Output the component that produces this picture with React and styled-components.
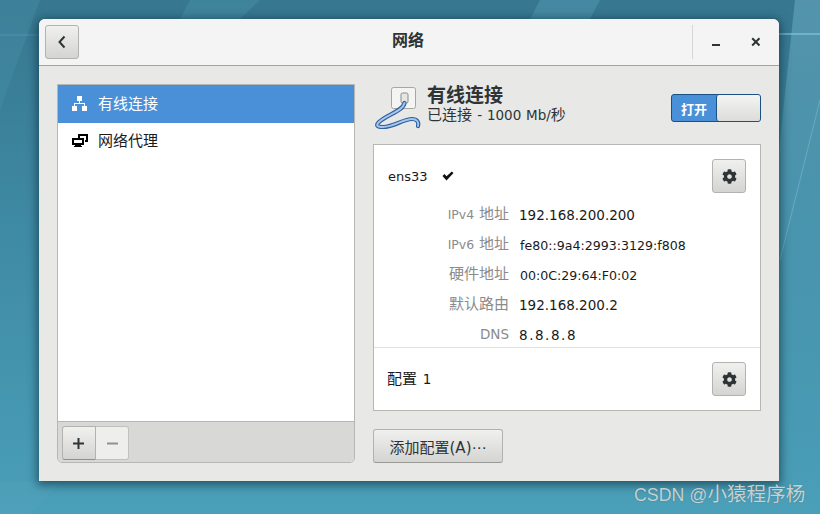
import React from "react";
import styled, { createGlobalStyle } from "styled-components";
import { FaCog } from "react-icons/fa";

const Global = createGlobalStyle`
  html, body { margin: 0; padding: 0; width: 820px; height: 514px; overflow: hidden; }
  body { font-family: "DejaVu Sans", "Noto Sans CJK SC", sans-serif; }
  * { box-sizing: border-box; }
`;

const Desktop = styled.div`
  position: relative;
  width: 820px;
  height: 514px;
  padding: 19px 41px 33px 39px;
  overflow: hidden;
  background: linear-gradient(180deg, #37778f 0%, #3f8aa4 45%, #4a9fb9 100%);
`;

const Wallpaper = styled.svg`
  position: absolute;
  inset: 0;
`;

const Window = styled.div`
  position: relative;
  width: 740px;
  height: 462px;
  display: flex;
  flex-direction: column;
  background: #e8e8e7;
  border-radius: 6px 6px 0 0;
  box-shadow: 0 2px 10px 2px rgba(8, 40, 55, 0.6);
`;

const Header = styled.header`
  position: relative;
  height: 47px;
  flex: none;
  display: flex;
  align-items: center;
  padding: 0 0 1px 6px;
  background: #f4f4f4;
  border-bottom: 1px solid #a3a3a0;
  border-radius: 6px 6px 0 0;
`;

const Title = styled.h1`
  position: absolute;
  left: 0;
  right: 2px;
  top: 12px;
  margin: 0;
  text-align: center;
  font-size: 16px;
  line-height: 20px;
  font-weight: 700;
  color: #2e3436;
`;

const raised = `
  border: 1px solid #b2b2af;
  border-radius: 3px;
  background: linear-gradient(180deg, #f0f0ef 0%, #d4d4d2 100%);
  padding: 0;
  display: flex;
  align-items: center;
  justify-content: center;
  color: #2e3436;
`;

const BackButton = styled.button`
  ${raised}
  width: 34px;
  height: 34px;
`;

const WindowControls = styled.div`
  margin-left: auto;
  height: 34px;
  width: 87px;
  border-left: 1px solid #d6d6d4;
  display: flex;
  align-items: center;
  padding-left: 19px;
  gap: 30px;
`;

const Body = styled.main`
  flex: 1;
  display: flex;
  gap: 18px;
  padding: 18px;
`;

const Sidebar = styled.aside`
  width: 298px;
  height: 379px;
  display: flex;
  flex-direction: column;
  background: #fff;
  border: 1px solid #b6b6b3;
  border-radius: 0 0 5px 5px;
`;

const SideList = styled.ul`
  flex: 1;
  margin: 0;
  padding: 0;
  list-style: none;
`;

const SideRow = styled.li`
  height: 38px;
  display: flex;
  align-items: center;
  gap: 10px;
  padding: 0 0 0 14px;
  font-size: 15px;
  color: ${(p) => (p.$active ? "#fff" : "#1a1a1a")};
  background: ${(p) => (p.$active ? "#4a90d9" : "transparent")};
`;

const SideLabel = styled.span`
  margin-bottom: ${(p) => (p.$active ? 4 : 6)}px;
`;

const SideIcon = styled.svg`
  margin-bottom: ${(p) => (p.$active ? 1 : 3)}px;
`;

const SideToolbar = styled.div`
  height: 41px;
  flex: none;
  display: flex;
  padding: 4px;
  background: #d8d8d6;
  border-top: 1px solid #b6b6b3;
  border-radius: 0 0 4px 4px;
`;

const AddButton = styled.button`
  ${raised}
  width: 34px;
  height: 34px;
  padding-right: 2px;
  border-radius: 3px 0 0 3px;
  border-color: #b2b2af #b2b2af #8f8f8c;
`;

const RemoveButton = styled.button`
  width: 33px;
  height: 34px;
  padding: 0;
  display: flex;
  align-items: center;
  justify-content: center;
  border: 1px solid #c0c0bd;
  border-left: none;
  border-radius: 0 3px 3px 0;
  background: #eeeeed;
`;

const Panel = styled.section`
  width: 388px;
  display: flex;
  flex-direction: column;
`;

const PanelHead = styled.div`
  height: 60px;
  display: flex;
  align-items: flex-start;
`;

const DeviceIcon = styled.svg`
  flex: none;
  margin: 1px 5px 0 1px;
`;

const DeviceText = styled.div`
  display: flex;
  flex-direction: column;
`;

const DeviceName = styled.div`
  font-size: 19px;
  line-height: 22px;
  font-weight: 700;
  color: #2e3436;
`;

const DeviceStatus = styled.div`
  font-size: 15px;
  line-height: 19px;
  color: #2e3436;
  word-spacing: 0.5px;
`;

const Latin = styled.span`
  font-size: ${(p) => p.$size || 13.5}px;
`;

const Toggle = styled.div`
  margin: 10px 0 0 auto;
  width: 90px;
  height: 28px;
  display: flex;
  border: 1px solid #1c4f82;
  border-radius: 3px;
  overflow: hidden;
  background: #4a90d9;
`;

const ToggleLabel = styled.span`
  width: 44px;
  display: flex;
  align-items: center;
  justify-content: center;
  color: #fff;
  font-size: 13px;
  font-weight: 700;
`;

const ToggleKnob = styled.span`
  flex: 1;
  border-left: 1px solid #1c4f82;
  border-radius: 3px 0 0 3px;
  background: linear-gradient(180deg, #f4f4f3 0%, #dcdcda 100%);
`;

const Card = styled.div`
  height: 267px;
  padding-top: 14px;
  background: #fff;
  border: 1px solid #b6b6b3;
  display: flex;
  flex-direction: column;
`;

const ConnRow = styled.div`
  height: 34px;
  flex: none;
  padding: 0 14px;
  display: flex;
  align-items: center;
  font-size: 13px;
  color: #1a1a1a;
`;

const CheckIcon = styled.svg`
  margin-left: 14px;
`;

const GearButton = styled.button`
  ${raised}
  width: 34px;
  height: 34px;
  margin-left: auto;
`;

const DetailGrid = styled.dl`
  flex: 1;
  margin: 7px 0 0;
  padding: 0;
  display: grid;
  grid-template-columns: 135px 1fr;
  grid-auto-rows: 30px;
  column-gap: 10px;
  align-items: center;
  overflow: hidden;
`;

const Term = styled.dt`
  text-align: right;
  color: #8b8b8b;
  font-size: 15px;
  line-height: 18px;
  margin-top: -2px;
`;

const Value = styled.dd`
  margin: 0;
  padding-left: ${(p) => (p.$hex ? "1px" : "0")};
  color: #1a1a1a;
  font-size: ${(p) => (p.$hex ? "12.6px" : "13.5px")};
  letter-spacing: ${(p) => (p.$wide ? "1.55px" : "0")};
  white-space: nowrap;
`;

const ProfileRow = styled.div`
  height: 63px;
  flex: none;
  padding: 0 14px 0 13px;
  display: flex;
  align-items: center;
  border-top: 1px solid #e2e2e0;
  font-size: 15px;
  color: #1a1a1a;
`;

const ProfileName = styled.span`
  margin-top: -3px;
  word-spacing: 1px;
`;

const AddProfile = styled.button`
  ${raised}
  margin-top: 18px;
  width: 130px;
  height: 34px;
  font-family: inherit;
  font-size: 15px;
  color: #2e3436;
  border-color: #b2b2af #b2b2af #989895;
`;

const Watermark = styled.div`
  position: absolute;
  left: 634px;
  top: 483px;
  font-family: "Liberation Sans", "Noto Sans CJK SC", sans-serif;
  font-size: 17.8px;
  line-height: 22px;
  color: rgba(222, 228, 228, 0.85);
  text-shadow: 0 0 1px rgba(60, 70, 70, 0.6);
  white-space: nowrap;
`;

const WatermarkName = styled.span`
  font-size: 19.6px;
`;

const Gear = () => <FaCog size={15} color="#2e3436" />;

const Scenery = () => (
  <Wallpaper width="820" height="514" viewBox="0 0 820 514">
    <defs>
      <linearGradient id="rightFade" x1="0" y1="0" x2="0" y2="1">
        <stop offset="0" stopColor="#74b6cd" stopOpacity="0.85" />
        <stop offset="1" stopColor="#4a9fb9" stopOpacity="0.2" />
      </linearGradient>
    </defs>
    <polygon points="795,0 820,0 820,514 740,514" fill="url(#rightFade)" opacity="0.55" />
    <polygon points="0,0 40,0 0,110" fill="#4a93ab" opacity="0.35" />
    <polygon points="190,0 260,0 240,19 180,19" fill="#4a93ab" opacity="0.45" />
    <polygon points="540,0 600,0 590,19 530,19" fill="#5ba3bb" opacity="0.4" />
    <polygon points="0,482 60,482 30,514 0,514" fill="#55a6be" opacity="0.3" />
    <line x1="779" y1="34" x2="820" y2="34" stroke="#8fd0e4" strokeWidth="1.5" opacity="0.7" />
    <line x1="820" y1="100" x2="780" y2="260" stroke="#8fd0e4" strokeWidth="1" opacity="0.4" />
    <line x1="0" y1="35" x2="39" y2="35" stroke="#6cb8d0" strokeWidth="1" opacity="0.35" />
  </Wallpaper>
);

const wirePath = "M30.500 18C29 26 14 29 5 37c-4 4-1 5 4 5 11 0 20-8 29-8 5 0 7 3 6 7";

export default function App() {
  return (
    <Desktop>
      <Global />
      <Scenery />
      <Window>
        <Header>
          <BackButton aria-label="返回">
            <svg width="10" height="14" viewBox="0 0 10 14">
              <path d="M7.5 1.5 2.5 7l5 5.5" fill="none" stroke="#2e3436" strokeWidth="2" />
            </svg>
          </BackButton>
          <Title>网络</Title>
          <WindowControls>
            <svg width="9" height="10" viewBox="0 0 9 10">
              <rect x="0" y="7" width="8" height="2" fill="#2e3436" />
            </svg>
            <svg width="10" height="10" viewBox="0 0 10 10">
              <path d="M1.2 1.2 8.5 8.5M8.5 1.2 1.2 8.5" stroke="#2e3436" strokeWidth="2" fill="none" />
            </svg>
          </WindowControls>
        </Header>
        <Body>
          <Sidebar>
            <SideList>
              <SideRow $active>
                <SideIcon $active width="16" height="15" viewBox="0 0 16 15">
                  <path
                    d="M5 0h5v5H8v2h5v3h2v5h-5v-5h2V8H3v2h2v5H0v-5h2V7h5V5H5z"
                    fill="#fff"
                  />
                </SideIcon>
                <SideLabel $active>有线连接</SideLabel>
              </SideRow>
              <SideRow>
                <SideIcon width="16" height="13" viewBox="0 0 16 13">
                  <path
                    d="M6 0h10v8h-3V6h1V2H8v2H6zM0 4h12v7H9v1h1v1H2v-1h1v-1H0zm2 2v3h8V6z"
                    fill="#000"
                    fillRule="evenodd"
                  />
                </SideIcon>
                <SideLabel>网络代理</SideLabel>
              </SideRow>
            </SideList>
            <SideToolbar>
              <AddButton aria-label="添加">
                <svg width="13" height="13" viewBox="0 0 13 13">
                  <path d="M5.500 1h2v4.500H12v2H7.500V12h-2V7.500H1v-2h4.500z" fill="#2e3436" />
                </svg>
              </AddButton>
              <RemoveButton aria-label="移除">
                <svg width="11" height="3" viewBox="0 0 11 3">
                  <rect width="11" height="2" y="0.5" fill="#8f9192" />
                </svg>
              </RemoveButton>
            </SideToolbar>
          </Sidebar>
          <Panel>
            <PanelHead>
              <DeviceIcon width="48" height="48" viewBox="0 0 48 48">
                <rect x="17.500" y="2.500" width="24" height="21" rx="2" fill="#f4f4f3" stroke="#a6a6a3" />
                <rect x="27" y="8" width="7" height="10" rx="1.500" fill="#e6e6e4" stroke="#8a8a88" />
                <path d={wirePath} fill="none" stroke="#2f5f9e" strokeWidth="4.2" strokeLinecap="round" />
                <path d={wirePath} fill="none" stroke="#a4c6ec" strokeWidth="2" strokeLinecap="round" />
              </DeviceIcon>
              <DeviceText>
                <DeviceName>有线连接</DeviceName>
                <DeviceStatus>
                  已连接 <Latin>- 1000 Mb/</Latin>秒
                </DeviceStatus>
              </DeviceText>
              <Toggle>
                <ToggleLabel>打开</ToggleLabel>
                <ToggleKnob />
              </Toggle>
            </PanelHead>
            <Card>
              <ConnRow>
                ens33
                <CheckIcon width="12" height="10" viewBox="0 0 12 10">
                  <path d="M.5 5 2.500 3l2 2.200L9.800.5 11.500 2 4.500 9.500z" fill="#111" />
                </CheckIcon>
                <GearButton aria-label="设置">
                  <Gear />
                </GearButton>
              </ConnRow>
              <DetailGrid>
                <Term><Latin $size={12.5}>IPv4</Latin> 地址</Term>
                <Value>192.168.200.200</Value>
                <Term><Latin $size={12.5}>IPv6</Latin> 地址</Term>
                <Value $hex>fe80::9a4:2993:3129:f808</Value>
                <Term>硬件地址</Term>
                <Value $hex>00:0C:29:64:F0:02</Value>
                <Term>默认路由</Term>
                <Value>192.168.200.2</Value>
                <Term><Latin>DNS</Latin></Term>
                <Value $wide>8.8.8.8</Value>
              </DetailGrid>
              <ProfileRow>
                <ProfileName>配置 <Latin>1</Latin></ProfileName>
                <GearButton aria-label="配置设置">
                  <Gear />
                </GearButton>
              </ProfileRow>
            </Card>
            <AddProfile>添加配置(A)⋯</AddProfile>
          </Panel>
        </Body>
      </Window>
      <Watermark>CSDN @<WatermarkName>小猿程序杨</WatermarkName></Watermark>
    </Desktop>
  );
}
